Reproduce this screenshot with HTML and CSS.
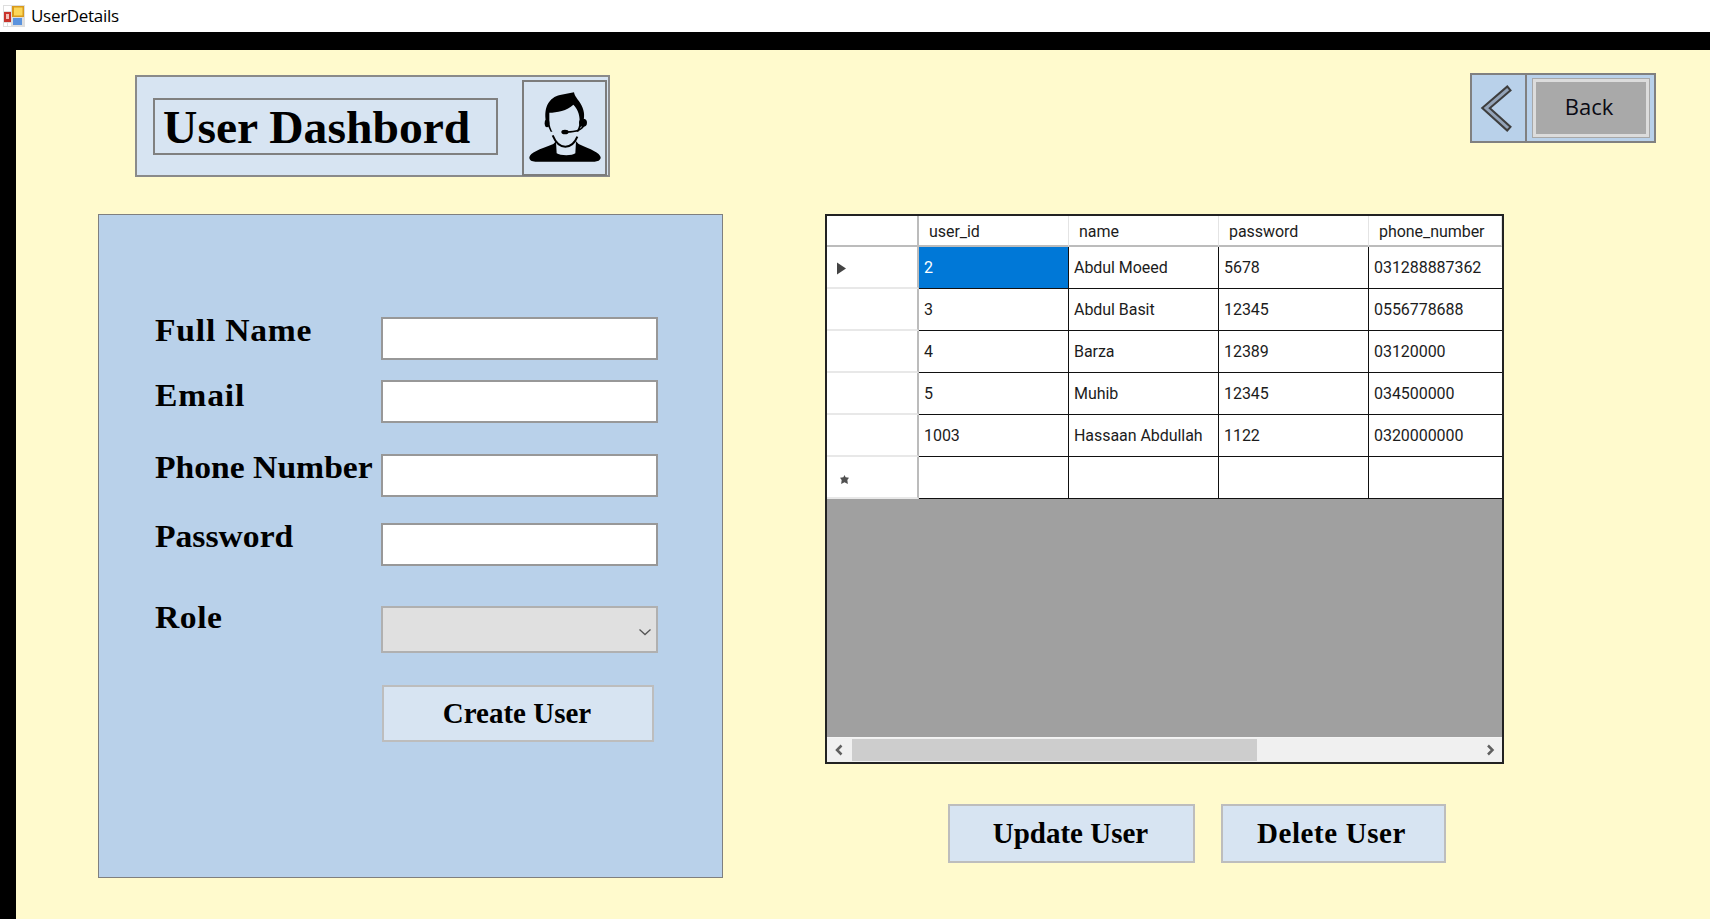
FILE: index.html
```html
<!DOCTYPE html>
<html lang="en">
<head>
<meta charset="utf-8">
<title>UserDetails</title>
<link rel="stylesheet" href="styles.css">
</head>
<body>
<div class="app">
  <header class="titlebar">
    <svg class="app-icon" viewBox="0 0 22 22" aria-hidden="true">
      <rect width="22" height="22" fill="#dedede"/>
      <rect x="1" y="1" width="7" height="5" fill="#fff"/>
      <rect x="9" y="1" width="12" height="11" fill="#d99a1c"/>
      <rect x="11" y="2.500" width="8.500" height="8" fill="#fcd75a"/>
      <rect x="1" y="7" width="7" height="10" fill="#c8332b"/>
      <rect x="3" y="9" width="3" height="5" fill="#f3c0b8"/>
      <rect x="1" y="18" width="3" height="3" fill="#fff"/>
      <rect x="5" y="18" width="3" height="3" fill="#fff"/>
      <rect x="10" y="13" width="9" height="7" fill="#5b93dd"/>
    </svg>
    <span class="window-title">UserDetails</span>
  </header>
  <main class="canvas">
    <section class="top-row">
      <div class="dash-head">
        <div class="dash-title"><h1>User Dashbord</h1></div>
        <div class="avatar-box">
          <svg class="avatar" viewBox="42 36 243 276" aria-hidden="true">
            <path fill="#000" d="M108 155C100 112 118 82 150 75L192 67C194 80 204 88 211 100C222 118 225 135 220 155L205 185L122 185Z"/>
            <path fill="#d7e4f2" d="M118 128C140 128 172 122 190 104C202 116 209 132 209 152C209 182 188 207 164 207C138 207 118 182 118 152Z"/>
            <circle cx="219" cy="158" r="12" fill="#000"/>
            <ellipse cx="111" cy="160" rx="7" ry="12" fill="#000"/>
            <path fill="none" stroke="#000" stroke-width="5" d="M222 165C216 180 195 186 170 186"/>
            <ellipse cx="165" cy="186" rx="11" ry="7" fill="#000"/>
            <path fill="none" stroke="#000" stroke-width="6" d="M128 196C138 220 152 230 166 230C182 230 194 220 202 200"/>
            <path fill="#000" d="M58 262C60 248 88 238 130 222L138 214L140 250C150 258 188 258 196 250L198 214L206 222C242 238 270 248 272 262C272 272 262 275 254 275L76 275C66 275 58 272 58 262Z"/>
          </svg>
        </div>
      </div>
      <div class="back-bar">
        <div class="back-arrow">
          <svg class="back-chevron" viewBox="0 0 54 66" aria-hidden="true">
            <path class="chevron-edge" d="M35 15L14 33L35 52"/>
            <path class="chevron-core" d="M35 15L14 33L35 52"/>
          </svg>
        </div>
        <div class="back-slot"><button class="back-btn" type="button">Back</button></div>
      </div>
    </section>
    <section class="main-row">
      <form class="user-form">
        <label class="field-label label-name">Full Name</label>
        <input class="field" type="text">
        <label class="field-label label-email">Email</label>
        <input class="field" type="text">
        <label class="field-label">Phone Number</label>
        <input class="field" type="text">
        <label class="field-label">Password</label>
        <input class="field" type="password">
        <label class="field-label label-role">Role</label>
        <div class="combo">
          <svg class="combo-arrow" viewBox="0 0 14 8" aria-hidden="true"><path d="M1.500 1.500L7 6.500L12.500 1.500"/></svg>
        </div>
        <button class="action create" type="button">Create User</button>
      </form>
      <div class="right-col">
        <div class="grid-view">
          <table class="data">
            <colgroup>
              <col class="col-head"><col class="col-data"><col class="col-data"><col class="col-data"><col class="col-last">
            </colgroup>
            <thead>
              <tr><th class="corner"></th><th>user_id</th><th>name</th><th>password</th><th>phone_number</th></tr>
            </thead>
            <tbody>
              <tr>
                <th class="row-head"><svg class="row-mark" viewBox="0 0 9 12" aria-hidden="true"><path d="M0 0L9 6L0 12Z"/></svg></th>
                <td class="selected">2</td><td>Abdul Moeed</td><td>5678</td><td>031288887362</td>
              </tr>
              <tr><th class="row-head"></th><td>3</td><td>Abdul Basit</td><td>12345</td><td>0556778688</td></tr>
              <tr><th class="row-head"></th><td>4</td><td>Barza</td><td>12389</td><td>03120000</td></tr>
              <tr><th class="row-head"></th><td>5</td><td>Muhib</td><td>12345</td><td>034500000</td></tr>
              <tr><th class="row-head"></th><td>1003</td><td>Hassaan Abdullah</td><td>1122</td><td>0320000000</td></tr>
              <tr>
                <th class="row-head"><svg class="row-star" viewBox="0 0 8 8" aria-hidden="true"><path d="M4 0L5 2L8 2.500L6.500 4.500L7 8L4 6.500L1 8L1.500 4.500L0 2.500L3 2Z"/></svg></th>
                <td></td><td></td><td></td><td></td>
              </tr>
            </tbody>
          </table>
          <div class="grid-empty"></div>
          <div class="scrollbar">
            <svg class="scroll-arrow" viewBox="0 0 10 12" aria-hidden="true"><path d="M7 1.500L2.500 6L7 10.500"/></svg>
            <div class="scroll-track"><div class="scroll-thumb"></div></div>
            <svg class="scroll-arrow" viewBox="0 0 10 12" aria-hidden="true"><path d="M3.500 1.500L8 6L3.500 10.500"/></svg>
          </div>
        </div>
        <div class="grid-actions">
          <button class="action update" type="button">Update User</button>
          <button class="action delete" type="button">Delete User</button>
        </div>
      </div>
    </section>
  </main>
</div>
</body>
</html>
```
FILE: styles.css
```css
* { box-sizing: border-box; }
html, body { margin: 0; height: 100%; overflow: hidden; background: #000; }
.app { display: flex; flex-direction: column; width: 1710px; height: 919px; }

.titlebar { flex: 0 0 32px; background: #fff; display: flex; align-items: center; padding: 0 0 0 3px; }
.app-icon { width: 22px; height: 22px; margin-right: 6px; }
.window-title { font: 17px/32px "Open Sans", sans-serif; color: #000; letter-spacing: -0.3px; }

.canvas { flex: 1; margin: 18px 0 0 16px; background: #fffacd; }

.top-row { display: flex; align-items: flex-start; padding: 23px 0 0 119px; }
.dash-head { display: flex; align-items: flex-start; width: 475px; height: 102px; margin-top: 2px; background: #d7e4f2; border: 2px solid #8a8a8a; }
.dash-title { flex: none; width: 345px; height: 57px; margin: 21px 0 0 16px; padding-left: 8px; border: 2px solid #808080; }
.dash-title h1 { display: inline-block; margin: 0; font: bold 47px/54px "Liberation Serif", serif; color: #000; white-space: nowrap; transform: scaleX(1.013); transform-origin: left center; }
.avatar-box { flex: none; width: 85px; height: 96px; margin: 3px 0 0 24px; border: 2px solid #7c7c7c; }
.avatar { display: block; width: 81px; height: 92px; }

.back-bar { display: flex; width: 186px; height: 70px; margin-left: 860px; background: #b9d1ea; border: 2px solid #808080; }
.back-arrow { width: 55px; border-right: 2px solid #808080; }
.back-chevron { display: block; width: 54px; height: 66px; }
.back-chevron path { fill: none; stroke-linecap: square; }
.chevron-edge { stroke: #3e3e3e; stroke-width: 7; }
.chevron-core { stroke: #93a3b8; stroke-width: 3; }
.back-slot { flex: 1; padding: 3px 5px 3px 5px; }
.back-btn { display: block; width: 118px; height: 60px; padding: 0 4px 4px 0; background: #a9a9a9; border: 4px solid #dcdcdc; outline: 1px solid #a8a8a8; outline-offset: -1px; font: 22px "Open Sans", sans-serif; color: #0a0a14; }

.main-row { display: flex; align-items: flex-start; margin-top: 37px; padding-left: 82px; }

.user-form { display: grid; grid-template-columns: 226px 277px; grid-template-rows: 63px 74px 69px 83px 79px 57px; align-items: start; width: 625px; height: 664px; padding: 102px 0 0 56px; background: #b9d1ea; border: 1px solid #7f7f7f; }
.field-label { display: block; margin-top: 2px; font: bold 31px/24px "Liberation Serif", serif; color: #000; white-space: nowrap; transform: scaleX(1.085); transform-origin: left center; }
.label-name { letter-spacing: 0.700px; }
.label-email { margin-top: 4px; letter-spacing: 0.800px; }
.label-role { margin-top: 0; letter-spacing: 0.500px; }
.field { display: block; width: 277px; height: 43px; margin: 0; padding: 0; background: #fff; border: 2px solid #989898; border-radius: 0; }
.combo { position: relative; width: 277px; height: 47px; background: #e0e0e0; border: 2px solid #b0b0b0; }
.combo-arrow { position: absolute; right: 4px; top: 20px; width: 14px; height: 8px; fill: none; stroke: #555; stroke-width: 1.300; }

.action { padding: 0 2px 0 0; background: #d7e4f2; border: 2px solid #bdbdbd; border-radius: 0; font: bold 29px "Liberation Serif", serif; color: #000; }
.create { grid-column: 2; width: 272px; height: 57px; margin-left: 1px; }
.update { width: 247px; height: 59px; }
.delete { width: 225px; height: 59px; padding-right: 4px; letter-spacing: 0.600px; }

.right-col { width: 679px; margin-left: 102px; }
.grid-view { display: flex; flex-direction: column; height: 550px; background: #a0a0a0; border: 2px solid #222; }
.data { table-layout: fixed; border-collapse: separate; border-spacing: 0; width: 675px; background: #fff; font: 16px "Roboto", sans-serif; letter-spacing: -0.050px; color: #1c1c1c; }
.col-head { width: 92px; }
.col-data { width: 150px; }
.col-last { width: 133px; }
.data thead th { height: 31px; padding: 2px 0 0 10px; text-align: left; font-weight: 400; background: #fff; border-right: 1px solid #e4e4e4; border-bottom: 2px solid #bcbcbc; }
.data thead .corner { border-right: 2px solid #bcbcbc; }
.data td { height: 42px; padding: 0 0 0 5px; white-space: nowrap; overflow: hidden; border-right: 1px solid #111; border-bottom: 1px solid #111; }
.data td:last-child { border-right: 0; }
.data .selected { background: #0078d7; color: #fff; }
.data .row-head { padding: 2px 0 0 10px; text-align: left; background: #fff; border-right: 2px solid #bcbcbc; border-bottom: 2px solid #e8e8e8; }
.row-mark { display: block; width: 9px; height: 13px; fill: #444; }
.row-star { display: block; width: 9px; height: 9px; margin: 3px 0 0 3px; fill: #505050; }

.grid-empty { flex: 1; }
.scrollbar { display: flex; align-items: center; flex: 0 0 25px; background: #f0f0f0; border-top: 1px solid #f4f4f4; }
.scroll-arrow { flex: 0 0 25px; height: 12px; fill: none; stroke: #606060; stroke-width: 2.500; }
.scroll-track { flex: 1; height: 22px; }
.scroll-thumb { width: 405px; height: 22px; background: #cdcdcd; }

.grid-actions { display: flex; gap: 26px; margin: 40px 0 0 123px; }
```
